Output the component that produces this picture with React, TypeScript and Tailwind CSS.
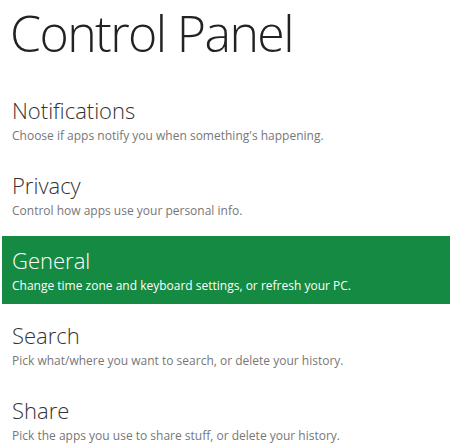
const items = [
  { title: "Notifications", desc: "Choose if apps notify you when something's happening." },
  { title: "Privacy", desc: "Control how apps use your personal info." },
  { title: "General", desc: "Change time zone and keyboard settings, or refresh your PC.", active: true },
  { title: "Search", desc: "Pick what/where you want to search, or delete your history." },
  { title: "Share", desc: "Pick the apps you use to share stuff, or delete your history." },
];

export default function App() {
  return (
    <div className="w-[450px] h-[447px] overflow-hidden bg-white font-['Open_Sans',sans-serif]">
      <h1 className="pl-[10px] pt-[2px] text-[50px] leading-[62px] font-light text-[#222] tracking-[-1.6px]">
        Control Panel
      </h1>

      <div className="mt-[22px] flex flex-col gap-[7px]">
        {items.map((item) => (
          <div
            key={item.title}
            className={
              item.active
                ? "ml-[2px] h-[68px] bg-[#148a42] pl-[10px] pt-[10px] text-white"
                : "ml-[2px] h-[68px] pl-[10px] pt-[10px]"
            }
          >
            <div className={item.active ? "text-[22px] leading-[28px] font-light" : "text-[22px] leading-[28px] font-light text-[#333]"}>
              {item.title}
            </div>
            <div className={item.active ? "mt-[4px] text-[12px] leading-[16px]" : "mt-[4px] text-[12px] leading-[16px] text-[#777]"}>
              {item.desc}
            </div>
          </div>
        ))}
      </div>
    </div>
  );
}
